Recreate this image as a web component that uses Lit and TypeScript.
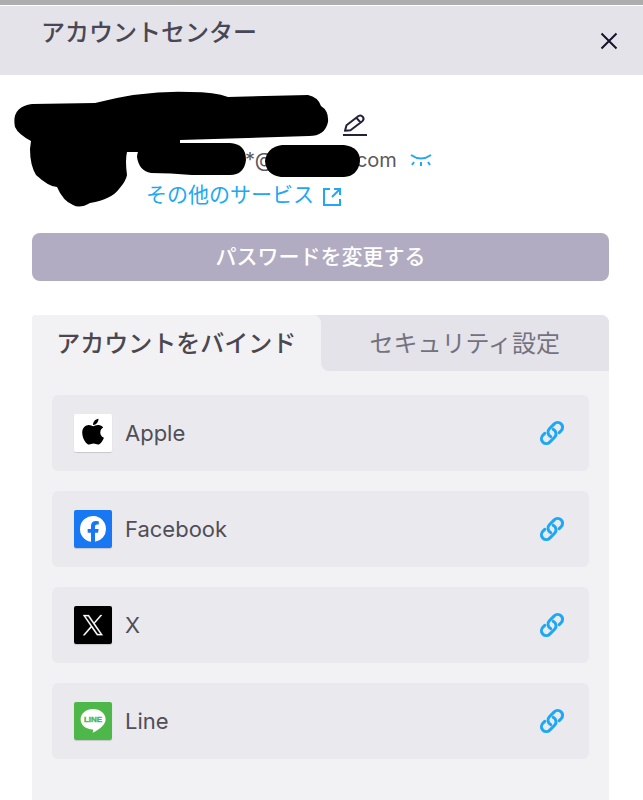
import { customElement, state } from 'lit/decorators.js';
import { css, html, svg, LitElement, TemplateResult } from 'lit';

interface Service {
  id: string;
  name: string;
  icon: TemplateResult;
}

const appleIcon = html`
  <svg viewBox="0 0 38 38" aria-hidden="true">
    <rect width="38" height="38" fill="#fff" />
    <g transform="translate(8 3) scale(0.0575)">
      <path d="M318.7 268.7c-.2-36.7 16.4-64.4 50-84.8-18.800-26.900-47.200-41.700-84.700-44.600-35.500-2.800-74.300 20.700-88.500 20.700-15 0-49.400-19.700-76.400-19.700C63.300 141.200 4 184.800 4 273.500q0 39.300 14.400 81.200c12.800 36.700 59 126.700 107.200 125.200 25.200-.6 43-17.900 75.800-17.900 31.800 0 48.300 17.900 76.400 17.900 48.600-.7 90.400-82.500 102.600-119.300-65.200-30.700-61.700-90-61.700-91.900zm-56.600-164.200c27.300-32.400 24.800-61.900 24-72.500-24.100 1.400-52 16.400-67.900 34.900-17.500 19.800-27.800 44.300-25.600 71.900 26.100 2 49.900-11.400 69.500-34.300z" />
    </g>
  </svg>
`;

const facebookIcon = html`
  <svg viewBox="0 0 38 38" aria-hidden="true">
    <rect width="38" height="38" fill="#1877f2" />
    <g transform="translate(6 6) scale(1.0833)">
      <path fill="#fff" d="M24 12a12 12 0 1 0-13.875 11.854v-8.385H7.078V12h3.047V9.356c0-3.007 1.791-4.668 4.533-4.668 1.312 0 2.686.234 2.686.234v2.953H15.830c-1.491 0-1.956.925-1.956 1.875V12h3.328l-.532 3.469h-2.796v8.385A12 12 0 0 0 24 12z" />
    </g>
  </svg>
`;

const xIcon = html`
  <svg viewBox="0 0 38 38" aria-hidden="true">
    <rect width="38" height="38" />
    <g transform="translate(9 9) scale(0.0165)">
      <path fill="#fff" stroke="#fff" stroke-width="16" d="M714.163 519.284L1160.890 0H1055.030L667.137 450.887L357.328 0H0L468.492 681.821L0 1226.370H105.866L515.491 750.218L842.672 1226.370H1200L714.137 519.284H714.163ZM569.165 687.828L521.697 619.934L144.011 79.694H306.615L611.412 515.685L658.880 583.579L1055.080 1150.300H892.476L569.165 687.854V687.828Z" />
    </g>
  </svg>
`;

const lineIcon = html`
  <svg viewBox="0 0 38 38" aria-hidden="true">
    <rect width="38" height="38" fill="#4eb749" />
    <path fill="#fff" d="M19 7c7.200 0 12.600 4.500 12.600 10.200 0 2.600-1.200 4.800-3.100 6.700-2.500 2.700-6.500 5.300-10 6.800.5-1.400.9-2.600.3-3.300C11.800 27.200 6.600 22.900 6.600 17.200 6.600 11.500 12 7 19 7z" />
    <text x="19" y="20" text-anchor="middle" font-family="Liberation Sans, sans-serif" font-size="8" font-weight="700" fill="#4eb749" stroke="#4eb749" stroke-width="0.4">LINE</text>
  </svg>
`;

const linkIcon = html`
  <svg class="link-icon" viewBox="0 0 24 24" aria-hidden="true">
    <path d="M13.190 8.688a4.500 4.500 0 0 1 1.242 7.244l-4.500 4.500a4.500 4.500 0 0 1-6.364-6.364l1.757-1.757" />
    <path d="M18.675 11.690l1.757-1.757a4.500 4.500 0 0 0-6.364-6.364l-4.500 4.500a4.500 4.500 0 0 0 1.242 7.244" />
  </svg>
`;

@customElement('app-root')
export class AccountCenter extends LitElement {
  static styles = css`
    :host {
      display: block;
      min-height: 100vh;
      background: #fff;
      color: #4a4754;
      font-family: Inter, 'Noto Sans CJK JP', sans-serif;
    }

    * {
      box-sizing: border-box;
    }

    button {
      margin: 0;
      padding: 0;
      border: none;
      background: none;
      color: inherit;
      font: inherit;
      cursor: pointer;
    }

    svg {
      display: block;
    }

    .page {
      display: flex;
      flex-direction: column;
      min-height: 100vh;
      border-top: 5px solid #adadad;
    }

    .header {
      display: flex;
      justify-content: space-between;
      height: 70px;
      padding: 9px 24px 0 41px;
      border-top: 1px solid #fff;
      background: #e4e3ea;
    }

    .title {
      margin: 0;
      font-size: 24px;
      font-weight: 500;
      line-height: 36px;
    }

    .close {
      width: 20px;
      height: 20px;
      margin-top: 16px;
    }

    .close svg {
      width: 20px;
      height: 20px;
      fill: none;
      stroke: #17132b;
      stroke-width: 2;
    }

    .profile {
      position: relative;
      display: flex;
      flex-direction: column;
      padding: 32px 32px 21px 146px;
    }

    .row {
      display: flex;
      align-items: center;
      height: 35px;
    }

    .name {
      width: 196px;
    }

    .edit svg {
      width: 26px;
      height: 24px;
      fill: none;
      stroke: #25213a;
      stroke-width: 2;
    }

    .email {
      display: flex;
      margin-right: 12px;
      color: #5a5860;
      font-size: 20px;
      line-height: 24px;
    }

    .local {
      width: 99px;
    }

    .domain {
      width: 76px;
    }

    .eye svg {
      width: 24px;
      height: 16px;
      fill: none;
      stroke: #22a7f2;
      stroke-width: 2;
    }

    .services {
      display: flex;
      align-items: center;
      gap: 8px;
      color: #22a7f2;
      font-size: 21px;
      line-height: 32px;
      text-decoration: none;
    }

    .services svg {
      width: 20px;
      height: 20px;
      margin-top: 4px;
      fill: none;
      stroke: currentColor;
      stroke-width: 2;
    }

    .scribble {
      position: absolute;
      top: 5px;
      left: 0;
      width: 370px;
      height: 140px;
      pointer-events: none;
    }

    .content {
      display: flex;
      flex: 1;
      flex-direction: column;
      padding: 0 34px 0 32px;
    }

    .password {
      height: 48px;
      margin: 0 0 34px;
      padding-bottom: 4px;
      border-radius: 8px;
      background: #b1acc1;
      color: #fff;
      font-size: 21px;
      font-weight: 500;
    }

    .tabs {
      display: grid;
      grid-template-columns: 1fr 1fr;
      border-radius: 4px 8px 0 0;
      background: linear-gradient(#e4e3ea 50%, #f2f2f5 50%);
      overflow: hidden;
    }

    .tab {
      height: 56px;
      padding-bottom: 4px;
      background: #e4e3ea;
      color: #75727f;
      font-size: 24px;
    }

    .tab:first-child {
      border-radius: 0 0 8px 0;
    }

    .tab:last-child {
      border-radius: 0 0 0 8px;
    }

    .tab.active {
      border-radius: 0 8px 0 0;
      background: #f2f2f5;
      color: #4a474f;
      font-weight: 500;
    }

    .panel {
      flex: 1;
      padding: 24px 20px;
      background: #f2f2f5;
    }

    .list {
      display: flex;
      flex-direction: column;
      gap: 20px;
      margin: 0;
      padding: 0;
      list-style: none;
    }

    .item {
      display: flex;
      align-items: center;
      gap: 13px;
      height: 76px;
      padding: 0 24px 0 22px;
      border-radius: 6px;
      background: #eae9ee;
      color: #504e57;
      font-size: 22px;
    }

    .logo {
      width: 38px;
      height: 38px;
      border-radius: 2px;
      box-shadow: 0 1px 1px rgba(0, 0, 0, 0.15);
      overflow: hidden;
    }

    .label {
      flex: 1;
    }

    .link-icon {
      width: 26px;
      height: 26px;
      fill: none;
      stroke: #1ba9f5;
      stroke-width: 2.8;
      stroke-linecap: round;
    }
  `;

  @state() activeTab = 0;

  tabs = ['アカウントをバインド', 'セキュリティ設定'];

  services: Service[] = [
    { id: 'apple', name: 'Apple', icon: appleIcon },
    { id: 'facebook', name: 'Facebook', icon: facebookIcon },
    { id: 'x', name: 'X', icon: xIcon },
    { id: 'line', name: 'Line', icon: lineIcon },
  ];

  render() {
    return html`
      <div class="page">
        ${this.renderHeader()}
        ${this.renderProfile()}
        <main class="content">
          <button class="password">パスワードを変更する</button>
          <div class="tabs" role="tablist">
            ${this.tabs.map((tab, index) => html`
              <button
                class="tab ${index === this.activeTab ? 'active' : ''}"
                role="tab"
                aria-selected="${index === this.activeTab}"
                @click="${() => this.selectTab(index)}"
              >${tab}</button>
            `)}
          </div>
          <div class="panel" role="tabpanel">
            ${this.activeTab === 0 ? this.renderServices() : ''}
          </div>
        </main>
      </div>
    `;
  }

  renderHeader() {
    return html`
      <header class="header">
        <h1 class="title">アカウントセンター</h1>
        <button class="close" aria-label="閉じる">
          <svg viewBox="0 0 20 20"><path d="M2.500 2.500l15 15M17.500 2.500l-15 15" /></svg>
        </button>
      </header>
    `;
  }

  renderProfile() {
    return html`
      <section class="profile">
        <div class="row">
          <span class="name"></span>
          <button class="edit" aria-label="編集">
            <svg viewBox="0 0 26 24">
              <path d="M1 22h24" />
              <path d="M3 17.800L4.500 12.200L16.500 3Q19 1.600 20.800 3.900T20.300 8.200L8.500 17.200ZM14.500 4.800L18.500 9.500" stroke-linejoin="round" />
            </svg>
          </button>
        </div>
        <div class="row">
          <span class="email"><span class="local"></span>*@<span class="domain"></span>.com</span>
          <button class="eye" aria-label="メールアドレスを表示">
            <svg viewBox="0 0 24 16">
              <path d="M2 3q10 7 20 0M5 10l-2 3M12 10v4M19 10l2 3" />
            </svg>
          </button>
        </div>
        <div class="row">
          <a class="services" href="#">
            その他のサービス
            <svg viewBox="0 0 20 20" aria-hidden="true">
              <path d="M8 2H2v16h16v-6M12 2h6v6M18 2l-8 8" />
            </svg>
          </a>
        </div>
        ${this.renderScribble()}
      </section>
    `;
  }

  // Marker strokes that hide the avatar, the name and the mail address
  renderScribble() {
    const strokes = [
      'M32 24L95 23Q145 10 190 12Q215 12 228 17L308 15Q318 17 321 26Q329 31 328 42Q325 56 309 56L180 60V65Q165 72 137 72L127 72Q125 80 127 95Q126 101 119 109Q112 119 90 123Q80 129 73 125Q63 121 57 107Q49 107 36 95Q30 85 30 69L31 61Q18 54 15 47Q11 27 32 24Z',
      'M153 63H230Q246 64 246 80Q244 95 230 95L192 95Q170 93 151 93Q139 91 137 77Q137 66 153 63Z',
      'M282 65H344Q360 67 360 81Q358 96 344 97H281Q266 95 265 81Q267 67 282 65Z',
    ];
    return html`
      <svg class="scribble" viewBox="0 0 370 140" aria-hidden="true">
        ${strokes.map((d) => svg`<path d="${d}" />`)}
      </svg>
    `;
  }

  renderServices() {
    return html`
      <ul class="list">
        ${this.services.map((service) => html`
          <li class="item">
            <span class="logo">${service.icon}</span>
            <span class="label" id="${service.id}">${service.name}</span>
            <button aria-label="${service.name}を連携">${linkIcon}</button>
          </li>
        `)}
      </ul>
    `;
  }

  selectTab(index: number): void {
    this.activeTab = index;
  }
}
